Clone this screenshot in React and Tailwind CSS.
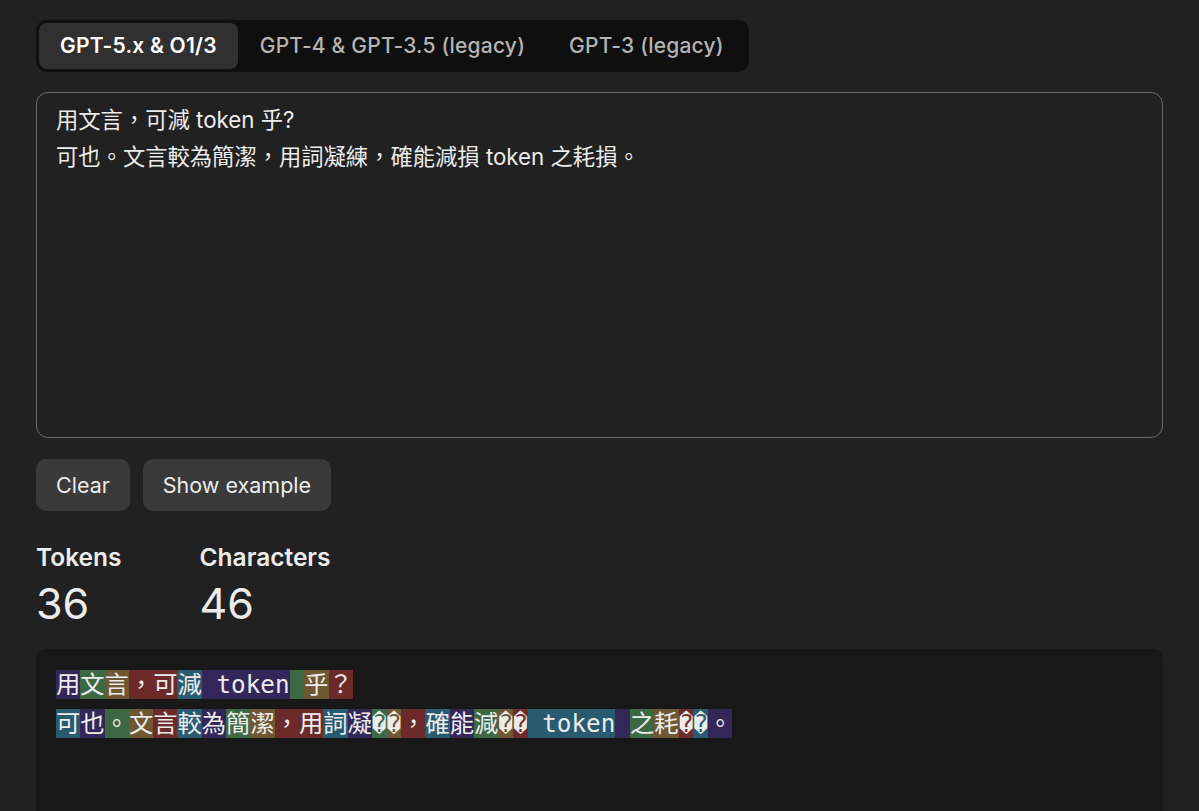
import React, { useState } from 'react';

const tabs = ['GPT-5.x & O1/3', 'GPT-4 & GPT-3.5 (legacy)', 'GPT-3 (legacy)'];

const sample = '用文言，可減 token 乎?\n可也。文言較為簡潔，用詞凝練，確能減損 token 之耗損。';

// token colours cycle: purple, green, olive, red, teal
const palette = [
  'bg-[#33275a]',
  'bg-[#3d6844]',
  'bg-[#6e5732]',
  'bg-[#6c2a2b]',
  'bg-[#285a70]',
];

const lines = [
  ['用', '文', '言', '，可', '減', ' token', ' ', '乎', '？'],
  ['可', '也', '。', '文', '言', '較', '為', '簡', '潔', '，用', '詞', '凝', '\uFFFD', '\uFFFD', '，', '確', '能', '減', '\uFFFD', '\uFFFD', ' token', ' ', '之', '耗', '\uFFFD', '\uFFFD', '。'],
];

const App = () => {
  const [active, setActive] = useState(0);
  const [text, setText] = useState(sample);

  let n = 0;

  return (
    <div className="min-h-screen bg-[#212121] px-9 pt-5 font-['Inter','Noto_Sans_CJK_TC',sans-serif] text-[#ececec]">
      <div className="inline-flex rounded-[11px] bg-[#0f0f0f] p-[3px]">
        {tabs.map((t, i) => (
          <button
            key={t}
            onClick={() => setActive(i)}
            className={
              i === active
                ? 'h-[46px] rounded-[8px] bg-[#303030] px-[21px] text-[21px] font-semibold tracking-[0.01em] text-white'
                : 'h-[46px] rounded-[8px] px-[22px] text-[21px] font-medium tracking-[0.01em] text-[#b4b4b4]'
            }
          >
            {t}
          </button>
        ))}
      </div>

      <textarea
        value={text}
        onChange={(e) => setText(e.target.value)}
        className="mt-5 block h-[346px] w-full resize-none rounded-[12px] border-[1.5px] border-[#6a6a6a] bg-transparent px-[19px] pt-[8px] text-[22.3px] leading-[37px] text-[#ececec] outline-none"
      />

      <div className="mt-[21px] flex gap-[13px]">
        <button onClick={() => setText('')} className="h-[52px] rounded-[10px] bg-[#3a3a3a] px-5 text-[21.5px] text-[#ececec]">
          Clear
        </button>
        <button onClick={() => setText(sample)} className="h-[52px] rounded-[10px] bg-[#3a3a3a] px-5 text-[21.5px] text-[#ececec]">
          Show example
        </button>
      </div>

      <div className="mt-[30px] flex gap-[78px]">
        <div>
          <div className="text-[24.5px] font-semibold leading-[32px] text-[#ececec]">Tokens</div>
          <div className="mt-[5px] text-[43px] leading-[50px] text-[#ececec]">36</div>
        </div>
        <div>
          <div className="text-[24.5px] font-semibold leading-[32px] text-[#ececec]">Characters</div>
          <div className="mt-[5px] text-[43px] leading-[50px] text-[#ececec]">46</div>
        </div>
      </div>

      <div className="mt-[21px] h-[300px] rounded-[10px] bg-[#181818] px-5 pt-4 font-['DejaVu_Sans_Mono','Noto_Sans_CJK_TC',monospace] text-[24.3px] leading-[39px] text-[#ececec]">
        {lines.map((line, li) => (
          <div key={li} className="whitespace-pre">
            {line.map((tok, ti) => {
              const c = palette[n % 5];
              n += 1;
              return (
                <span key={ti} className={c}>
                  {tok}
                </span>
              );
            })}
          </div>
        ))}
      </div>
    </div>
  );
};

export default App;
